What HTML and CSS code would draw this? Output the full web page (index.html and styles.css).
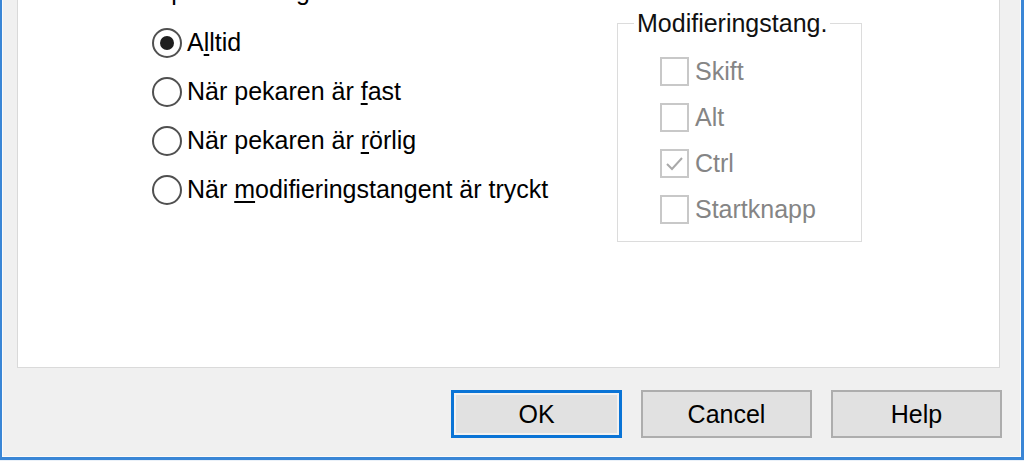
FILE: index.html
```html
<!DOCTYPE html>
<html lang="sv">
<head>
    <meta charset="UTF-8">
    <meta name="viewport" content="width=device-width, initial-scale=1.0">
    <title>Pekarens läge</title>
    <link rel="stylesheet" href="styles.css">
</head>
<body>

    <div class="window">
        <div class="panel">
            <div class="heading">Visa pekarens läge:</div>

            <div class="panelBody">
                <!-- radioknappar -->
                <div class="radioList">
                    <label class="radioRow"><span class="radio checked"></span><span>A<u>l</u>ltid</span></label>
                    <label class="radioRow"><span class="radio"></span><span>När pekaren är <u>f</u>ast</span></label>
                    <label class="radioRow"><span class="radio"></span><span>När pekaren är <u>r</u>örlig</span></label>
                    <label class="radioRow"><span class="radio"></span><span>När <u>m</u>odifieringstangent är tryckt</span></label>
                </div>

                <!-- modifieringstangenter (inaktiva) -->
                <fieldset class="groupBox">
                    <legend>Modifieringstang.</legend>
                    <div class="checkList">
                        <div class="checkRow"><span class="checkbox"></span><span>Skift</span></div>
                        <div class="checkRow"><span class="checkbox"></span><span>Alt</span></div>
                        <div class="checkRow">
                            <span class="checkbox">
                                <svg width="25" height="25" viewBox="0 0 25 25"><path d="M5 13 L10 18 L20 7" fill="none" stroke="#a9a9a9" stroke-width="2"/></svg>
                            </span><span>Ctrl</span>
                        </div>
                        <div class="checkRow"><span class="checkbox"></span><span>Startknapp</span></div>
                    </div>
                </fieldset>
            </div>
        </div>

        <div class="buttonBar">
            <button class="btn btnDefault">OK</button>
            <button class="btn">Cancel</button>
            <button class="btn">Help</button>
        </div>
    </div>

</body>
</html>
```

FILE: styles.css
```css
html, body {
    margin: 0;
    padding: 0;
    overflow: hidden;
    background-color: #eaf1f9;
}
.window {
    width: 1024px;
    height: 460px;
    box-sizing: border-box;
    background-color: #f0f0f0;
    border-left: 2px solid #3a86d6;
    border-right: 3px solid #3a86d6;
    border-bottom: 3px solid #3a86d6;
    box-shadow: inset 1px 0 0 #fbfbfb, inset -1px 0 0 #fbfbfb, inset 0 -1px 0 #fbfbfb;
    padding-left: 15px;
    padding-right: 19px;
    font-family: "Liberation Sans", Arial, sans-serif;
    font-size: 25px;
    color: #000;
}
.panel {
    width: 983px;
    height: 368px;
    box-sizing: border-box;
    background-color: #fff;
    border: 1px solid #d9d9d9;
    border-top: none;
    border-bottom-color: #dadada;
    overflow: hidden;
}
.heading {
    margin-top: -22px;
    margin-left: 100px;
    line-height: 26px;
    height: 26px;
    letter-spacing: -0.4px;
}
.panelBody {
    display: flex;
    align-items: flex-start;
    padding-top: 6px;
}
.radioList {
    display: flex;
    flex-direction: column;
    padding-top: 8px;
    padding-left: 134px;
    width: 465px;
}
.radioRow {
    display: flex;
    align-items: center;
    height: 49px;
    white-space: nowrap;
}
.radioRow u {
    text-underline-offset: 3px;
}
.radio {
    width: 30px;
    height: 30px;
    box-sizing: border-box;
    border: 2px solid #505050;
    border-radius: 50%;
    margin-right: 5px;
    display: flex;
    align-items: center;
    justify-content: center;
    flex-shrink: 0;
}
.radio.checked::after {
    content: "";
    width: 14px;
    height: 14px;
    border-radius: 50%;
    background-color: #1e1e1e;
}
.groupBox {
    margin: 0;
    padding: 0;
    width: 245px;
    box-sizing: border-box;
    border: 1px solid #dcdcdc;
}
.groupBox legend {
    margin-left: 16px;
    padding: 0 3px;
    line-height: 26px;
    color: #111;
}
.checkList {
    padding: 12px 0 9px 42px;
    display: flex;
    flex-direction: column;
}
.checkRow {
    display: flex;
    align-items: center;
    height: 46px;
    color: #858585;
}
.checkbox {
    width: 29px;
    height: 29px;
    box-sizing: border-box;
    border: 2px solid #c8c8c8;
    margin-right: 6px;
    display: flex;
    align-items: center;
    justify-content: center;
}
.buttonBar {
    display: flex;
    justify-content: flex-end;
    gap: 19px;
    margin-top: 22px;
    margin-right: 0;
}
.btn {
    width: 171px;
    height: 48px;
    box-sizing: border-box;
    background-color: #e1e1e1;
    border: 2px solid #adadad;
    font-family: "Liberation Sans", Arial, sans-serif;
    font-size: 25px;
    color: #000;
    padding: 0;
}
.btnDefault {
    border: 3px solid #0a74d6;
    box-shadow: inset 0 0 0 2px #f2f2f2;
}
```
